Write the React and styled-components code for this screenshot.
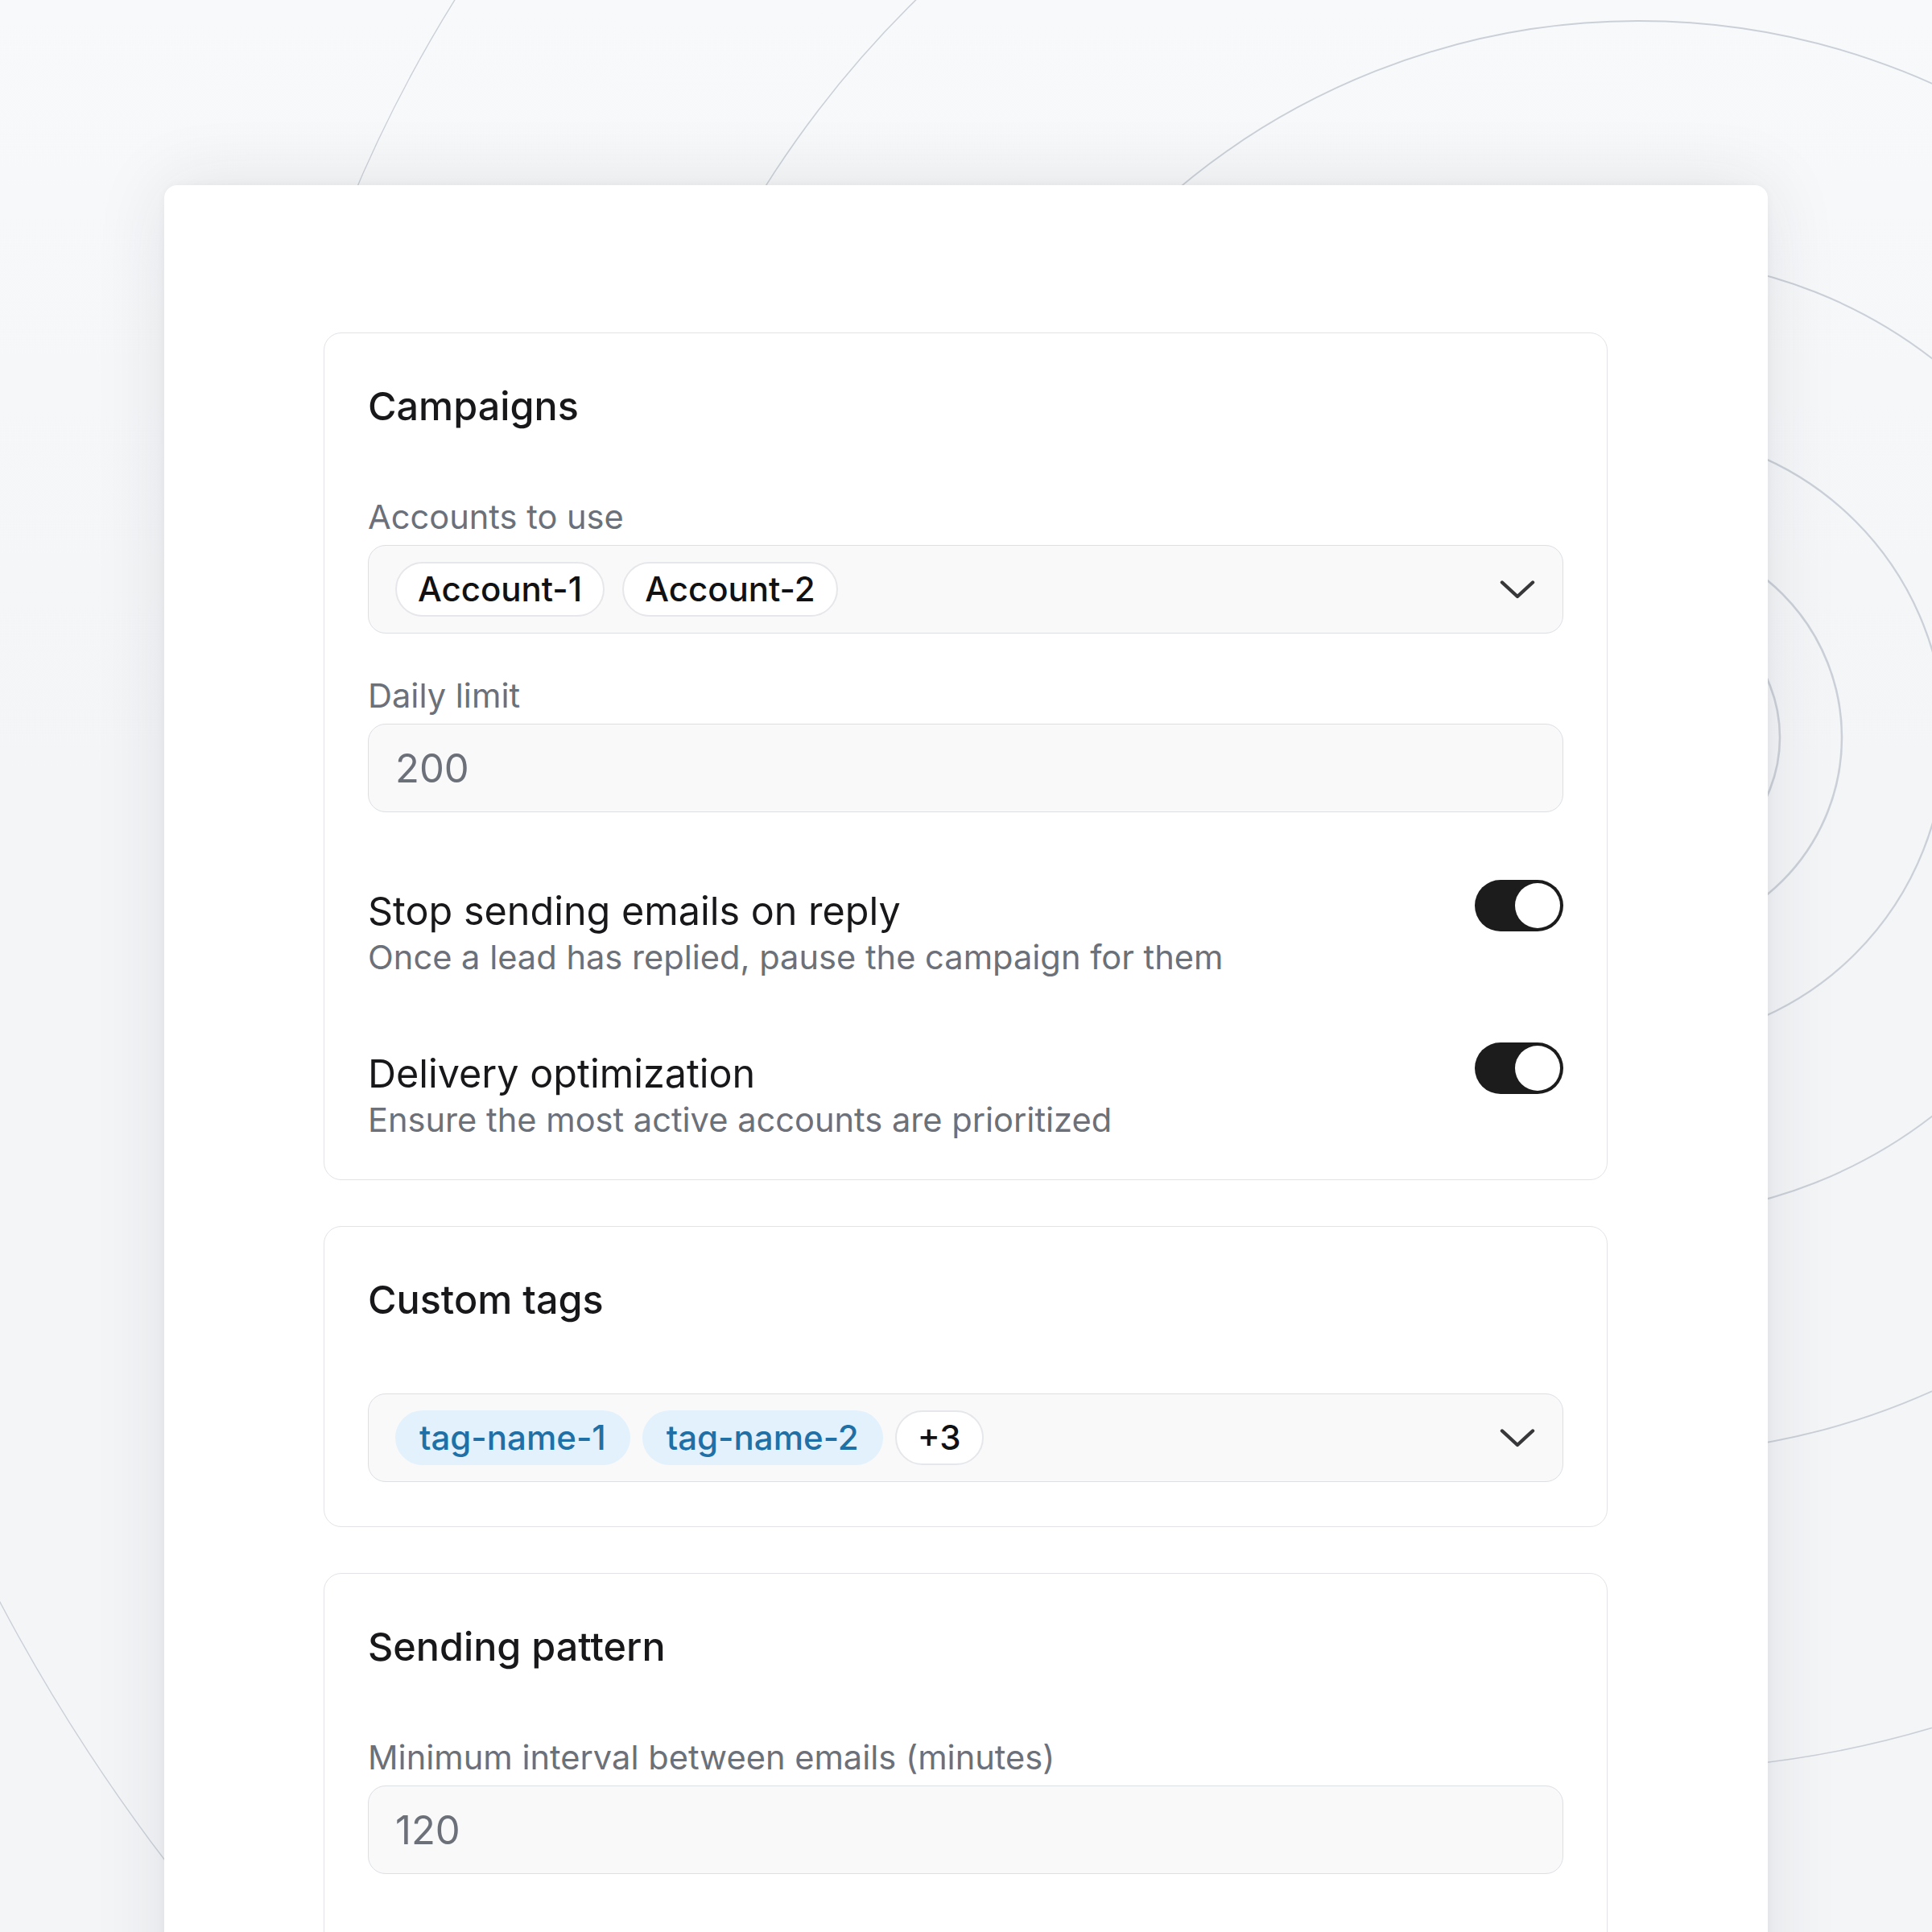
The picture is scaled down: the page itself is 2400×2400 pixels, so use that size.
import React from "react";
import styled, { createGlobalStyle } from "styled-components";

const GlobalStyle = createGlobalStyle`
  html, body { margin: 0; padding: 0; }
  body {
    background: #f5f6f8;
    font-family: Inter, "Noto Sans", "Liberation Sans", sans-serif;
    -webkit-font-smoothing: antialiased;
  }
  * { box-sizing: border-box; }
`;

const Page = styled.div`
  position: relative;
  width: 2400px;
  height: 2400px;
  overflow: hidden;
  padding: 230px 0 0 204px;
  background: linear-gradient(180deg, #f8f9fa 0%, #f4f5f7 40%, #f4f5f7 100%);
`;

const Backdrop = styled.svg`
  position: absolute;
  inset: 0;
  z-index: 0;
  pointer-events: none;
`;

const Card = styled.div`
  position: relative;
  z-index: 1;
  width: 1992px;
  background: #ffffff;
  border-radius: 16px;
  box-shadow: 0 0 90px rgba(30, 40, 60, 0.1), 0 0 12px rgba(30, 40, 60, 0.04);
  padding: 183px 199px 240px 198px;
  display: flex;
  flex-direction: column;
  gap: 57px;
`;

const Section = styled.section`
  border: 1px solid #e1e3e7;
  border-radius: 22px;
  padding: 67px 54px ${(p) => p.$bottom}px;
  display: flex;
  flex-direction: column;
`;

const SectionTitle = styled.h2`
  margin: 0 0 92px;
  font-size: 48.5px;
  line-height: 48px;
  font-weight: 500;
  color: #18181b;
`;

const Fields = styled.div`
  display: flex;
  flex-direction: column;
  gap: 56px;
`;

const Field = styled.div`
  display: flex;
  flex-direction: column;
  gap: 14px;
`;

const Label = styled.div`
  font-size: 41.6px;
  line-height: 42px;
  color: #6c7079;
`;

const Box = styled.div`
  height: 110px;
  border: 1px solid #dcdfe4;
  border-radius: 22px;
  background: #f9f9fa;
  display: flex;
  align-items: center;
  padding: 0 33px;
`;

const ValueText = styled.span`
  font-size: 49px;
  line-height: 49px;
  color: #6c7079;
`;

const ChipRow = styled.div`
  display: flex;
  align-items: center;
  gap: ${(p) => p.$gap}px;
  flex: 1;
`;

const Chip = styled.span`
  height: 68px;
  display: inline-flex;
  align-items: center;
  padding: 0 ${(p) => (p.$tag ? 28 : 26)}px;
  border-radius: 999px;
  border: 2px solid ${(p) => (p.$tag ? "transparent" : "#e6e7ea")};
  background: ${(p) => (p.$tag ? "#e2f1fc" : "#ffffff")};
  color: ${(p) => (p.$tag ? "#1f70a6" : "#111113")};
  font-size: 42px;
  line-height: 42px;
  font-weight: 500;
  white-space: nowrap;
`;

const Chevron = styled.svg`
  flex: none;
  margin-right: 1px;
`;

const ToggleList = styled.div`
  margin-top: 84px;
  display: flex;
  flex-direction: column;
  gap: 85px;
`;

const ToggleRow = styled.div`
  display: flex;
  justify-content: space-between;
  align-items: flex-start;
`;

const ToggleText = styled.div`
  padding-top: 15px;
  display: flex;
  flex-direction: column;
  gap: 12px;
`;

const ToggleTitle = styled.div`
  font-size: 48.5px;
  line-height: 48px;
  color: #18181b;
`;

const ToggleDesc = styled.div`
  font-size: 41.6px;
  line-height: 42px;
  color: #6c7079;
`;

const Switch = styled.div`
  flex: none;
  width: 110px;
  height: 64px;
  border-radius: 32px;
  background: ${(p) => (p.$on ? "#1c1c1c" : "#d4d6da")};
  display: flex;
  align-items: center;
  justify-content: ${(p) => (p.$on ? "flex-end" : "flex-start")};
  padding: 4px;
`;

const Knob = styled.span`
  width: 56px;
  height: 56px;
  border-radius: 50%;
  background: #ffffff;
`;

const ChevronDown = () => (
  <Chevron width="44" height="24" viewBox="0 0 44 24">
    <path
      d="M3 3.5 L22 21 L41 3.5"
      fill="none"
      stroke="#38383a"
      strokeWidth="4.4"
      strokeLinecap="round"
      strokeLinejoin="round"
    />
  </Chevron>
);

const rings = [
  { r: 175, w: 2.6 },
  { r: 252, w: 2.6 },
  { r: 380, w: 2.3 },
  { r: 595, w: 2.1 },
  { r: 890, w: 1.9 },
  { r: 1283, w: 1.6 },
  { r: 1733, w: 1.4 },
  { r: 2302, w: 1.4 },
];

const Toggle = ({ title, desc }) => (
  <ToggleRow>
    <ToggleText>
      <ToggleTitle>{title}</ToggleTitle>
      <ToggleDesc>{desc}</ToggleDesc>
    </ToggleText>
    <Switch $on>
      <Knob />
    </Switch>
  </ToggleRow>
);

export default function App() {
  return (
    <>
      <GlobalStyle />
      <Page>
        <Backdrop width="2400" height="2400" viewBox="0 0 2400 2400">
          {rings.map((ring) => (
            <circle
              key={ring.r}
              cx="2036"
              cy="916"
              r={ring.r}
              fill="none"
              stroke="#cbd0d8"
              strokeWidth={ring.w}
            />
          ))}
        </Backdrop>
        <Card>
          <Section $bottom={53}>
            <SectionTitle>Campaigns</SectionTitle>
            <Fields>
              <Field>
                <Label>Accounts to use</Label>
                <Box>
                  <ChipRow $gap={22}>
                    <Chip>Account-1</Chip>
                    <Chip>Account-2</Chip>
                  </ChipRow>
                  <ChevronDown />
                </Box>
              </Field>
              <Field>
                <Label>Daily limit</Label>
                <Box>
                  <ValueText>200</ValueText>
                </Box>
              </Field>
            </Fields>
            <ToggleList>
              <Toggle
                title="Stop sending emails on reply"
                desc="Once a lead has replied, pause the campaign for them"
              />
              <Toggle
                title="Delivery optimization"
                desc="Ensure the most active accounts are prioritized"
              />
            </ToggleList>
          </Section>

          <Section $bottom={55}>
            <SectionTitle>Custom tags</SectionTitle>
            <Box>
              <ChipRow $gap={15}>
                <Chip $tag>tag-name-1</Chip>
                <Chip $tag>tag-name-2</Chip>
                <Chip>+3</Chip>
              </ChipRow>
              <ChevronDown />
            </Box>
          </Section>

          <Section $bottom={200}>
            <SectionTitle>Sending pattern</SectionTitle>
            <Field>
              <Label>Minimum interval between emails (minutes)</Label>
              <Box>
                <ValueText>120</ValueText>
              </Box>
            </Field>
          </Section>
        </Card>
      </Page>
    </>
  );
}
